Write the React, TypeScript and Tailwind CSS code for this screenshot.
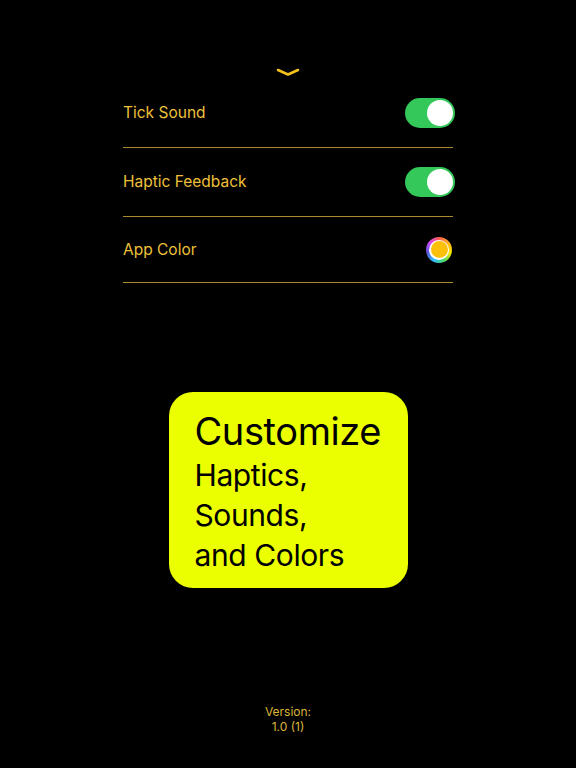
import React from "react";

function Toggle() {
  return (
    <div className="w-[50px] h-[30px] rounded-full bg-[#34c759] p-[2px] flex justify-end">
      <div className="w-[26px] h-[26px] rounded-full bg-white" />
    </div>
  );
}

function ColorDot() {
  return (
    <div className="w-[26px] h-[26px] rounded-full p-[3px] bg-[conic-gradient(#ff5a4d,#ffb020,#ffe600,#4cd964,#30c0ff,#5856d6,#d04cff,#ff5a4d)]">
      <div className="w-full h-full rounded-full bg-white p-[1.5px]">
        <div className="w-full h-full rounded-full bg-[#fcbf0a]" />
      </div>
    </div>
  );
}

function Row({ label, height, children }: { label: string; height: string; children: React.ReactNode }) {
  return (
    <div className={`flex items-center justify-between border-b border-[#a98a30] ${height}`}>
      <span className="text-[15.5px] text-[#eec03a]">{label}</span>
      {children}
    </div>
  );
}

export default function App() {
  return (
    <div
      className="w-[576px] h-[768px] bg-black flex flex-col items-center"
      style={{ fontFamily: "Inter, 'Liberation Sans', sans-serif" }}
    >
      <svg className="mt-[67px]" width="24" height="10" viewBox="0 0 24 10" fill="none">
        <path d="M2 3 L12 7.5 L22 3" stroke="#f5c21b" strokeWidth="2.6" strokeLinecap="round" strokeLinejoin="round" />
      </svg>

      <div className="w-[330px] mt-[2px] flex flex-col">
        <Row label="Tick Sound" height="h-[69px]">
          <div className="mr-[-2px]">
            <Toggle />
          </div>
        </Row>
        <Row label="Haptic Feedback" height="h-[69px]">
          <div className="mr-[-2px]">
            <Toggle />
          </div>
        </Row>
        <Row label="App Color" height="h-[66px]">
          <div className="mr-[1px]">
            <ColorDot />
          </div>
        </Row>
      </div>

      <div className="mt-[109px] w-[239px] h-[196px] rounded-[24px] bg-[#ebff00] pl-[26px] pt-[15px] text-black">
        <div className="text-[38px] leading-[48px] tracking-[-0.4px]">Customize</div>
        <div className="text-[30px] leading-[40px] tracking-[-0.4px]">Haptics,</div>
        <div className="text-[30px] leading-[40px] tracking-[-0.4px]">Sounds,</div>
        <div className="text-[30px] leading-[40px] tracking-[-0.4px]">and Colors</div>
      </div>

      <div className="mt-auto mb-[34px] flex flex-col items-center text-[12px] leading-[15px] text-[#dcb43a]">
        <span>Version:</span>
        <span>1.0 (1)</span>
      </div>
    </div>
  );
}
